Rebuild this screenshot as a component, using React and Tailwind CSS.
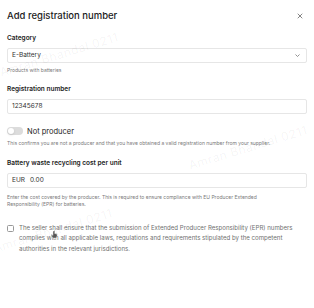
import React from "react";

function Watermark({ className }) {
  return (
    <div
      className={`pointer-events-none absolute origin-left -rotate-[17deg] whitespace-nowrap text-[12px] tracking-[0.5px] text-black/[0.05] ${className}`}
    >
      Amran Bhandal 0211
    </div>
  );
}

export default function App() {
  return (
    <div
      className="relative h-[308px] w-[314px] overflow-hidden bg-white px-[7px] text-[#1c1c1c]"
      style={{ fontFamily: "Inter, 'Noto Sans', sans-serif" }}
    >
      <div className="flex items-center justify-between pt-[10px]">
        <h1 className="text-[9.5px] font-medium leading-[12px]">Add registration number</h1>
        <svg width="6" height="6" viewBox="0 0 6 6" className="mr-[4px] text-[#777]">
          <path d="M1 1L5 5M5 1L1 5" stroke="currentColor" strokeWidth="0.9" strokeLinecap="round" />
        </svg>
      </div>

      <div className="mt-[11.5px] text-[6.5px] font-semibold leading-[9px]">Category</div>
      <div className="mt-[5.5px] flex h-[15px] items-center justify-between rounded-[2px] border border-[#e6e6e6] pl-[4px] pr-[6px]">
        <span className="text-[6.5px] text-[#333]">E-Battery</span>
        <svg width="5" height="3" viewBox="0 0 5 3" className="text-[#777]">
          <path d="M0.5 0.5L2.5 2.5L4.5 0.5" fill="none" stroke="currentColor" strokeWidth="0.8" />
        </svg>
      </div>
      <div className="mt-[3px] text-[5px] leading-[8px] text-[#7a7a7a]">Products with batteries</div>

      <div className="mt-[10.5px] text-[6.5px] font-semibold leading-[9px]">Registration number</div>
      <div className="mt-[5.5px] flex h-[15px] items-center rounded-[2px] border border-[#e6e6e6] pl-[4px]">
        <span className="text-[6.5px] text-[#333]">12345678</span>
      </div>

      <div className="mt-[13px] flex h-[8px] items-center gap-[4px]">
        <div className="flex h-[8px] w-[16px] items-center rounded-full bg-[#dcdcdc] px-[1px]">
          <div className="h-[6px] w-[6px] rounded-full bg-white shadow-sm" />
        </div>
        <span className="text-[7.5px] leading-[9px]">Not producer</span>
      </div>
      <div className="mt-[4px] text-[5px] leading-[8px] text-[#7a7a7a]">
        This confirms you are not a producer and that you have obtained a valid registration number from your supplier.
      </div>

      <div className="mt-[11.5px] text-[6.5px] font-semibold leading-[9px]">Battery waste recycling cost per unit</div>
      <div className="mt-[5.5px] flex h-[15px] items-center gap-[5px] rounded-[2px] border border-[#e6e6e6] pl-[4px]">
        <span className="text-[6.5px] text-[#333]">EUR</span>
        <span className="text-[6.5px] text-[#333]">0.00</span>
      </div>
      <div className="mt-[5.5px] pr-[24px] text-[5px] leading-[7px] text-[#7a7a7a]">
        Enter the cost covered by the producer. This is required to ensure compliance with EU Producer Extended Responsibility (EPR) for batteries.
      </div>

      <div className="mt-[15px] flex gap-[5px]">
        <div className="mt-[2px] h-[7px] w-[7px] shrink-0 rounded-[1.5px] border border-[#999]" />
        <p className="pr-[6px] text-[6.1px] leading-[10.5px] text-[#6f6f6f]">
          The seller shall ensure that the submission of Extended Producer Responsibility (EPR) numbers complies with all applicable laws, regulations and requirements stipulated by the competent authorities in the relevant jurisdictions.
        </p>
      </div>

      <Watermark className="left-[0px] top-[64px]" />
      <Watermark className="left-[189px] top-[157px]" />
      <Watermark className="left-[-6px] top-[240px]" />

      <svg width="8" height="9" viewBox="0 0 8 9" className="absolute left-[50px] top-[230px]">
        <path d="M3 1v4.5L2 4.6c-.5-.4-1.1.1-.8.6L2.8 8h3.6l.8-2.5V4.3c0-.6-.8-.6-.8 0V4c0-.6-.8-.6-.8 0v-.3c0-.6-.8-.6-.8 0V1c0-.6-.8-.6-.8 0z" fill="#555" stroke="#fff" strokeWidth="0.4" />
      </svg>
    </div>
  );
}
